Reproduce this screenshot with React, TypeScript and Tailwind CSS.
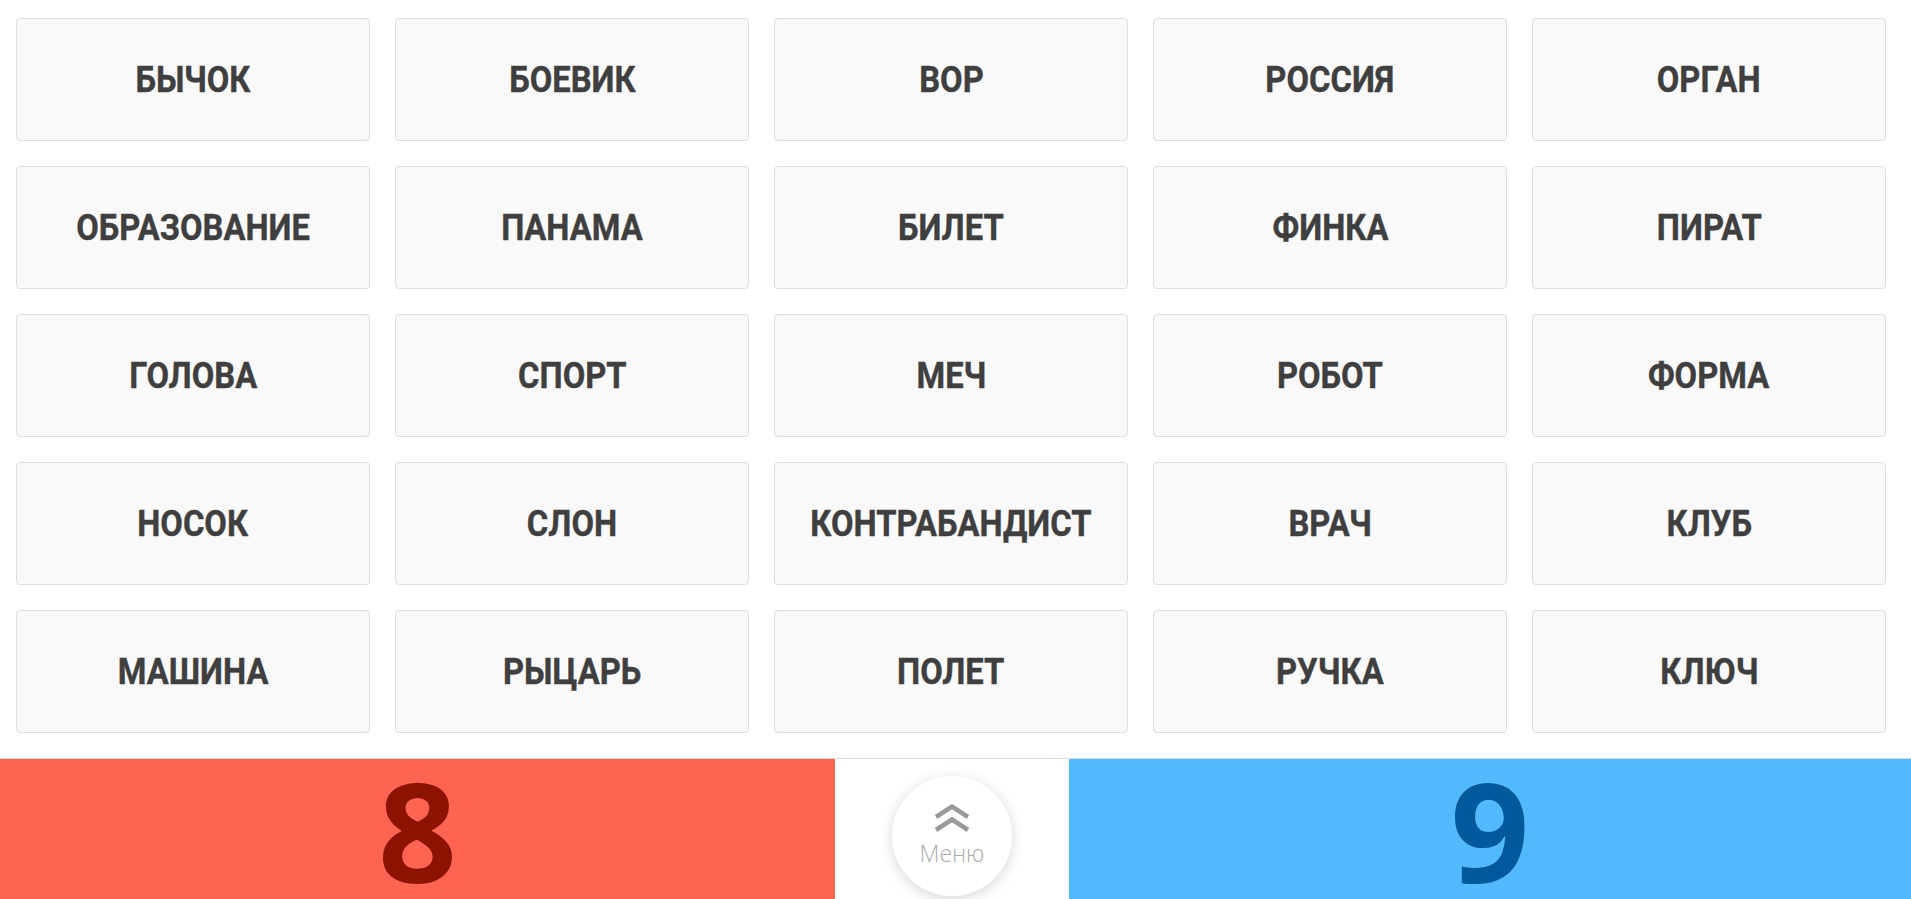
import { useState } from 'react'

const words = [
  'БЫЧОК', 'БОЕВИК', 'ВОР', 'РОССИЯ', 'ОРГАН',
  'ОБРАЗОВАНИЕ', 'ПАНАМА', 'БИЛЕТ', 'ФИНКА', 'ПИРАТ',
  'ГОЛОВА', 'СПОРТ', 'МЕЧ', 'РОБОТ', 'ФОРМА',
  'НОСОК', 'СЛОН', 'КОНТРАБАНДИСТ', 'ВРАЧ', 'КЛУБ',
  'МАШИНА', 'РЫЦАРЬ', 'ПОЛЕТ', 'РУЧКА', 'КЛЮЧ',
]

export default function App() {
  const [red] = useState(8)
  const [blue] = useState(9)

  return (
    <div className="min-h-screen bg-white font-['Roboto',sans-serif]">
      {/* сетка слов */}
      <div className="grid grid-cols-5 gap-[25px] pl-4 pr-[25px] pt-[18px] pb-[25px]">
        {words.map((w) => (
          <div
            key={w}
            className="h-[123px] flex items-center justify-center bg-[#f9f9f9] border border-[#dddddd] rounded-[4px]"
          >
            <span className="inline-block scale-x-[0.885] text-[37px] font-bold text-[#3f3f3f] leading-none whitespace-nowrap [-webkit-text-stroke:0.4px_#3f3f3f]">
              {w}
            </span>
          </div>
        ))}
      </div>

      {/* счёт */}
      <div className="flex h-[142px] overflow-hidden border-t border-[#dddddd]">
        <div className="w-[835px] bg-[#ff6452] flex justify-center">
          <span className="font-['Open_Sans',sans-serif] font-bold text-[138px] leading-none text-[#8c1300] mt-[1px]">
            {red}
          </span>
        </div>
        <div className="w-[234px] bg-white flex justify-center pt-[17px]">
          <button className="w-[120px] h-[120px] rounded-full bg-white shadow-[0_3px_14px_rgba(0,0,0,0.16)] flex flex-col items-center justify-center">
            <svg width="36" height="28" viewBox="0 0 36 28" fill="none" stroke="#999999" strokeWidth="4.5" className="-mt-[4px]">
              <polyline points="2,13 18,2.5 34,13" />
              <polyline points="2,26 18,15.5 34,26" />
            </svg>
            <span className="font-['Open_Sans',sans-serif] font-light text-[23px] text-[#aaaaaa] leading-none mt-[10px]">
              Меню
            </span>
          </button>
        </div>
        <div className="flex-1 bg-[#52b9ff] flex justify-center">
          <span className="font-['Open_Sans',sans-serif] font-bold text-[138px] leading-none text-[#00599b] mt-[1px]">
            {blue}
          </span>
        </div>
      </div>
    </div>
  )
}
